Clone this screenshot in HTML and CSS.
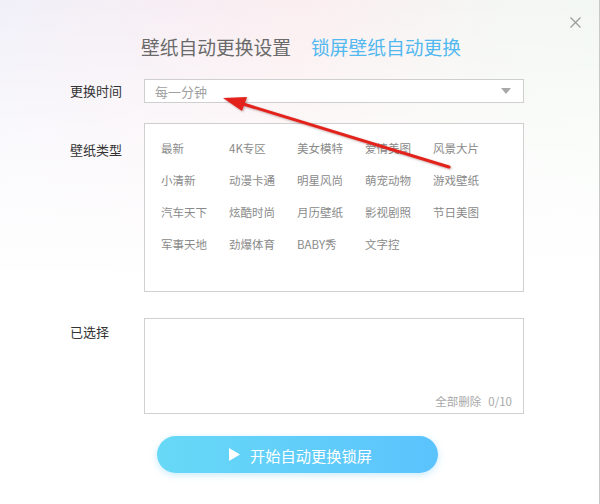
FILE: index.html
```html
<!DOCTYPE html>
<html lang="zh-CN">
<head>
  <meta charset="UTF-8" />
  <title>锁屏壁纸自动更换</title>
  <link rel="stylesheet" href="styles.css">
</head>
<body>
  <div class="window">
    <div class="topbar">
      <button class="close" title="关闭">
        <svg width="11" height="11" viewBox="0 0 11 11"><path d="M0.5 0.5L10.5 10.5M10.5 0.5L0.5 10.5" stroke="#9a9a9a" stroke-width="1.2" fill="none"/></svg>
      </button>
    </div>

    <div class="tabs">
      <span class="tab">壁纸自动更换设置</span>
      <span class="tab tab-active">锁屏壁纸自动更换</span>
    </div>

    <div class="form">
      <div class="row row-time">
        <span class="label">更换时间</span>
        <div class="select">
          <span class="select-text">每一分钟</span>
          <i class="caret"></i>
        </div>
      </div>

      <div class="row">
        <span class="label label-types">壁纸类型</span>
        <div class="box types">
          <span class="type">最新</span>
          <span class="type">4K专区</span>
          <span class="type">美女模特</span>
          <span class="type">爱情美图</span>
          <span class="type">风景大片</span>
          <span class="type">小清新</span>
          <span class="type">动漫卡通</span>
          <span class="type">明星风尚</span>
          <span class="type">萌宠动物</span>
          <span class="type">游戏壁纸</span>
          <span class="type">汽车天下</span>
          <span class="type">炫酷时尚</span>
          <span class="type">月历壁纸</span>
          <span class="type">影视剧照</span>
          <span class="type">节日美图</span>
          <span class="type">军事天地</span>
          <span class="type">劲爆体育</span>
          <span class="type">BABY秀</span>
          <span class="type">文字控</span>
        </div>
      </div>

      <div class="row row-picked">
        <span class="label label-picked">已选择</span>
        <div class="box picked">
          <div class="picked-foot">
            <span>全部删除</span>
            <span>0/10</span>
          </div>
        </div>
      </div>
    </div>

    <div class="actions">
      <button class="start">
        <svg width="11" height="13" viewBox="0 0 11 13"><path d="M0 0L11 6.5L0 13Z" fill="#ffffff"/></svg>
        <span>开始自动更换锁屏</span>
      </button>
    </div>

    <!-- annotation arrow drawn over the dialog -->
    <svg class="pointer" width="600" height="504" viewBox="0 0 600 504">
      <line x1="449" y1="167" x2="240" y2="103" stroke="#e4221c" stroke-width="3" stroke-linecap="round"/>
      <polygon points="223,98 247,97 242,111" fill="#e4221c"/>
    </svg>
  </div>
</body>
</html>
```

FILE: styles.css
```css
html, body {
  margin: 0;
  padding: 0;
  background: #ffffff;
}
.window {
  position: relative;
  width: 600px;
  height: 504px;
  box-sizing: border-box;
  border-right: 1px solid #c8c8c8;
  overflow: hidden;
  font-family: "Noto Sans CJK SC", "Noto Sans", sans-serif;
  background:
    linear-gradient(to bottom, rgba(255, 255, 255, 0) 0, rgba(255, 255, 255, 0.6) 140px, #ffffff 280px),
    linear-gradient(100deg, #f1f0f9 0%, #f8eef3 30%, #fbeef0 45%, #f5f6f3 70%, #f1f9f3 100%);
}
.topbar {
  display: flex;
  justify-content: flex-end;
  height: 34px;
  box-sizing: border-box;
  padding: 17px 18px 0 0;
}
.close {
  width: 11px;
  height: 11px;
  padding: 0;
  margin: 0;
  border: none;
  background: none;
  cursor: pointer;
  display: flex;
}
.tabs {
  display: flex;
  gap: 20px;
  padding-left: 141px;
  height: 26px;
  line-height: 26px;
}
.tab {
  font-size: 18.75px;
  color: #6a6a6a;
  cursor: pointer;
}
.tab-active {
  color: #52b8f0;
}
.form {
  margin-top: 19px;
  padding-left: 70px;
}
.row {
  display: grid;
  grid-template-columns: 74px 380px;
  align-items: start;
}
.row-time {
  align-items: center;
}
.row + .row {
  margin-top: 20px;
}
.row-picked.row {
  margin-top: 26px;
}
.label {
  font-size: 13px;
  line-height: 16px;
  color: #333333;
}
.label-types {
  padding-top: 19px;
}
.label-picked {
  padding-top: 6px;
}
.select {
  display: flex;
  align-items: center;
  justify-content: space-between;
  height: 24px;
  box-sizing: border-box;
  padding: 0 12px 0 10px;
  border: 1px solid #cfcfcf;
  background: #ffffff;
}
.select-text {
  font-size: 13px;
  color: #a0a0a0;
}
.caret {
  width: 0;
  height: 0;
  border-left: 5px solid transparent;
  border-right: 5px solid transparent;
  border-top: 6px solid #a8a8a8;
}
.box {
  box-sizing: border-box;
  border: 1px solid #d0d0d0;
  background: #ffffff;
}
.types {
  height: 169px;
  padding: 8px 0 0 16px;
  display: grid;
  grid-template-columns: repeat(5, 68px);
  grid-auto-rows: 32px;
  align-content: start;
}
.type {
  font-size: 11.5px;
  line-height: 32px;
  color: #8a8a8a;
  cursor: pointer;
  white-space: nowrap;
}
.picked {
  height: 96px;
  display: flex;
  flex-direction: column;
  justify-content: flex-end;
  align-items: flex-end;
  padding: 0 11px 5px 0;
}
.picked-foot {
  display: flex;
  gap: 7px;
  font-size: 11.5px;
  line-height: 14px;
  color: #a8a8a8;
}
.actions {
  margin-top: 22px;
  padding-left: 157px;
}
.start {
  width: 281px;
  height: 37px;
  border: none;
  border-radius: 19px;
  background: linear-gradient(to right, #67d9f6, #5bc3fd);
  box-shadow: 0 2px 7px rgba(95, 195, 250, 0.35);
  display: flex;
  align-items: center;
  justify-content: center;
  gap: 10px;
  padding: 0 0 0 6px;
  color: #ffffff;
  font-family: "Noto Sans CJK SC", "Noto Sans", sans-serif;
  font-size: 15.25px;
  cursor: pointer;
}
.pointer {
  position: absolute;
  left: 0;
  top: 0;
  pointer-events: none;
  filter: drop-shadow(1px 1px 1px rgba(80, 0, 0, 0.35));
}
```
